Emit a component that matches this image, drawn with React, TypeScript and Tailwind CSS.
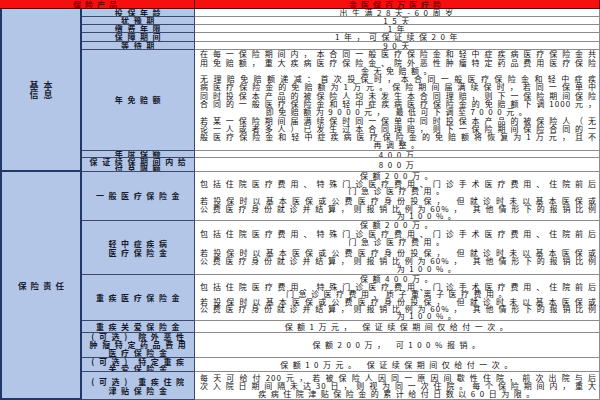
type Line = { t: string; k: "f" | "c" | "r" | "gap" }

type Row = { label: string[]; lines: Line[]; lead: string; labelLead?: string }

const f = (t: string): Line => ({ t, k: "f" })
const c = (t: string): Line => ({ t, k: "c" })
const r = (t: string): Line => ({ t, k: "r" })
const gap: Line = { t: "", k: "gap" }

const medical = (amount: string, third: string, withGap: boolean): Line[] => [
  c(amount),
  f("包括住院医疗费用、特殊门诊医疗费用、门诊手术医疗费用、住院前后"),
  c(third),
  ...(withGap ? [gap] : []),
  f("若投保时以基本医保或公费医疗身份投保， 但就诊时未以基本医保或"),
  f("公费医疗身份就诊并结算，则报销比例为60%， 其他情形下的报销比例"),
  r("为100%。"),
]

const basic: Row[] = [
  { label: ["投保年龄"], lines: [c("出生满28天-60周岁")], lead: "leading-[8px]" },
  { label: ["犹豫期"], lines: [c("15天")], lead: "leading-[8px]" },
  { label: ["缴费年限"], lines: [c("1年")], lead: "leading-[8px]" },
  { label: ["保障期间"], lines: [c("1年，可保证续保20年")], lead: "leading-[8px]" },
  { label: ["等待期"], lines: [c("90天")], lead: "leading-[8px]" },
  {
    label: ["年免赔额"],
    lead: "leading-[8.3px]",
    lines: [
      f("在每一保险期间内，本合同一般医疗保险金和轻中症疾病医疗保险金共"),
      f("用免赔额，重大疾病医疗保险金、院外恶性肿瘤特定药品费用医疗保险"),
      c("金无免赔额。"),
      f("无理赔免赔额递减：首次投保时，本合同一般医疗保险金和轻中症疾"),
      f("病医疗保险金的免赔额为1万元。保险期间届满续保时，若同一保单中"),
      f("同时投保本产品的被保险人均未发生本合同理赔，则下一保险期间保险"),
      f("合同的一般医疗保险金和轻中症疾病医疗保险金的免赔额下调1000元，"),
      c("即免赔额为9000元， 最低可下调至7000元。"),
      f("若某一保险期间届满续保时同一保单中同时投保本产品的被保险人（无"),
      f("论一人或者多人）已发生过本合同理赔，则下一保险期间保险合同的一"),
      f("般医疗保险金和轻中症疾病医疗保险金的免赔额将恢复为1万元，且不"),
      c("再调整。"),
    ],
  },
  { label: ["年度保额"], lines: [c("400万")], lead: "leading-[7px]" },
  { label: ["保证续保期间内给", "付总限额"], lines: [c("800万")], lead: "leading-[7px]", labelLead: "leading-[7px]" },
]

const duty: Row[] = [
  { label: ["一般医疗保险金"], lines: medical("保额200万。", "门急诊医疗费用。", true), lead: "leading-[7.6px]" },
  {
    label: ["轻中症疾病", "医疗保险金"],
    lines: medical("保额200万。", "门急诊医疗费用。", true),
    lead: "leading-[8.2px]",
    labelLead: "leading-[9px]",
  },
  {
    label: ["重疾医疗保险金"],
    lines: medical("保额400万。", "门急诊医疗费用、质子重离子医疗费用。", false),
    lead: "leading-[7.4px]",
  },
  { label: ["重疾关爱保险金"], lines: [c("保额1万元， 保证续保期间仅给付一次。")], lead: "leading-[8px]" },
  {
    label: ["(可选) 院外恶性", "肿瘤特定药品费用", "医疗保险金"],
    lines: [c("保额200万， 可100%报销。")],
    lead: "leading-[8px]",
  },
  { label: ["(可选) 特定重疾", "关爱保险金"], lines: [c("保额10万元。 保证续保期间仅给付一次。")], lead: "leading-[8px]", labelLead: "leading-[7px]" },
  {
    label: ["(可选) 重疾住院", "津贴保险金"],
    lead: "leading-[8px]",
    labelLead: "leading-[9px]",
    lines: [
      f("每天可给付200元，若被保险人因同一原因间歇性住院，前次出院与后"),
      f("次入院日期间隔未达30日，则视为同一次住院。每个保险期间内，重大"),
      c("疾病住院津贴保险金的累计给付日数以60日为限。"),
    ],
  },
]

function Label({ lines, lead }: { lines: string[]; lead: string }) {
  return (
    <div
      className={`flex flex-col items-center justify-center overflow-hidden border-b border-r border-[#3b4a6b] bg-[#b4c6e7] pl-[4px] text-[8px] font-bold tracking-[4.6px] text-[#141a2c] ${lead}`}
    >
      {lines.map((l) => (
        <div key={l} className="whitespace-nowrap">
          {l}
        </div>
      ))}
    </div>
  )
}

function Body({ lines, lead }: { lines: Line[]; lead: string }) {
  return (
    <div
      className={`flex flex-col justify-center overflow-hidden border-b border-r border-[#8c8c8c] bg-white pl-[5px] pr-[2px] text-[8px] text-[#111] ${lead}`}
    >
      {lines.map((l, i) => {
        if (l.k === "gap") return <div key={i} className="h-[3px]" />
        if (l.k === "f")
          return (
            <div key={i} className="text-justify tracking-[1px] [text-align-last:justify]">
              {l.t}
            </div>
          )
        if (l.k === "r")
          return (
            <div key={i} className="whitespace-nowrap pl-[60px] text-center tracking-[4.5px]">
              {l.t}
            </div>
          )
        return (
          <div key={i} className="whitespace-nowrap text-center tracking-[4.5px]">
            {l.t}
          </div>
        )
      })}
    </div>
  )
}

export default function App() {
  return (
    <div className="h-[400px] w-[600px] overflow-hidden bg-white font-['Noto_Sans_CJK_SC',sans-serif]">
      <div className="grid grid-cols-[82px_113px_405px] grid-rows-[9px_8px_8px_8px_9px_8px_101px_7px_14px_49px_54px_46px_12px_25px_14px_28px]">
        {/* header */}
        <div className="col-span-2 flex items-center justify-center border-b border-r border-[#5a0000] bg-[#f50f0f] text-[8px] font-bold leading-[9px] tracking-[4px] text-[#7a0000]">
          保险产品
        </div>
        <div className="flex items-center justify-center border-b border-r border-[#5a0000] bg-[#f50f0f] text-[8px] font-bold leading-[9px] tracking-[4px] text-[#7a0000]">
          金医保百万医疗险
        </div>

        {/* 基本信息 */}
        <div className="row-span-8 flex flex-col items-center justify-center border-b-2 border-l-2 border-r-2 border-[#1f3864] bg-[#b4c6e7] pl-[5px] text-[9px] font-bold leading-[9px] tracking-[5px] text-[#1b2233]">
          <div>基本</div>
          <div>信息</div>
        </div>
        {basic.map((row) => (
          <div key={row.label.join("")} className="contents">
            <Label lines={row.label} lead={row.labelLead ?? "leading-[8px]"} />
            <Body lines={row.lines} lead={row.lead} />
          </div>
        ))}

        {/* 保险责任 */}
        <div className="row-span-7 flex items-center justify-center border-b-2 border-l-2 border-r-2 border-[#1f3864] bg-[#b4c6e7] pl-[4px] text-[8.5px] font-bold tracking-[4px] text-[#1b2233]">
          保险责任
        </div>
        {duty.map((row) => (
          <div key={row.label.join("")} className="contents">
            <Label lines={row.label} lead={row.labelLead ?? "leading-[8px]"} />
            <Body lines={row.lines} lead={row.lead} />
          </div>
        ))}
      </div>
    </div>
  )
}
